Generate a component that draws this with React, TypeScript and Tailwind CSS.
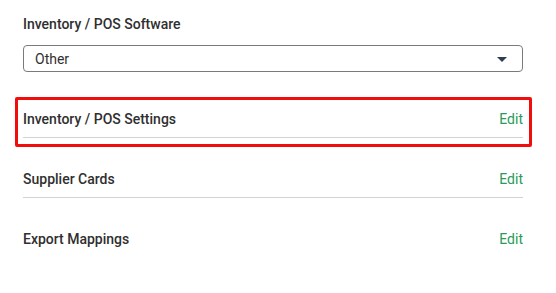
import React from 'react'

const rows = [
  { label: 'Inventory / POS Settings', highlight: true },
  { label: 'Supplier Cards', highlight: false },
  { label: 'Export Mappings', highlight: false, last: true },
]

export default function App() {
  return (
    <div className="min-h-[293px] w-[556px] bg-white font-['Roboto',sans-serif] text-[#2f2f2f]">
      <div className="w-[523px] pl-[23px] pt-[14px]">
        <div className="text-[14px] leading-[20px] font-medium">Inventory / POS Software</div>
        <div className="mt-[11px] flex h-[27px] items-center justify-between rounded-[4px] border border-[#7a7a7a] pl-[11px] pr-[15px]">
          <span className="text-[14px] leading-[20px]">Other</span>
          <svg width="10" height="5" viewBox="0 0 10 5" className="mt-[1px]">
            <path d="M0 0 L10 0 L5 5 Z" fill="#2c3e50" />
          </svg>
        </div>
        <div className="mt-[6px]">
          {rows.map((r) => (
            <div key={r.label} className="relative pt-[31px]">
              {r.highlight && (
                <div className="pointer-events-none absolute top-[19px] -right-[9px] -bottom-[9px] -left-[8px] rounded-[2px] border-[3px] border-[#f20d0d]" />
              )}
              <div
                className={`flex items-center justify-between pb-[8px] ${r.last ? '' : 'border-b border-[#cdd3d7]'}`}
              >
                <span className="text-[14px] leading-[20px] font-medium">{r.label}</span>
                <span className="text-[14px] leading-[20px] text-[#2a9a5a]">Edit</span>
              </div>
            </div>
          ))}
        </div>
      </div>
    </div>
  )
}
